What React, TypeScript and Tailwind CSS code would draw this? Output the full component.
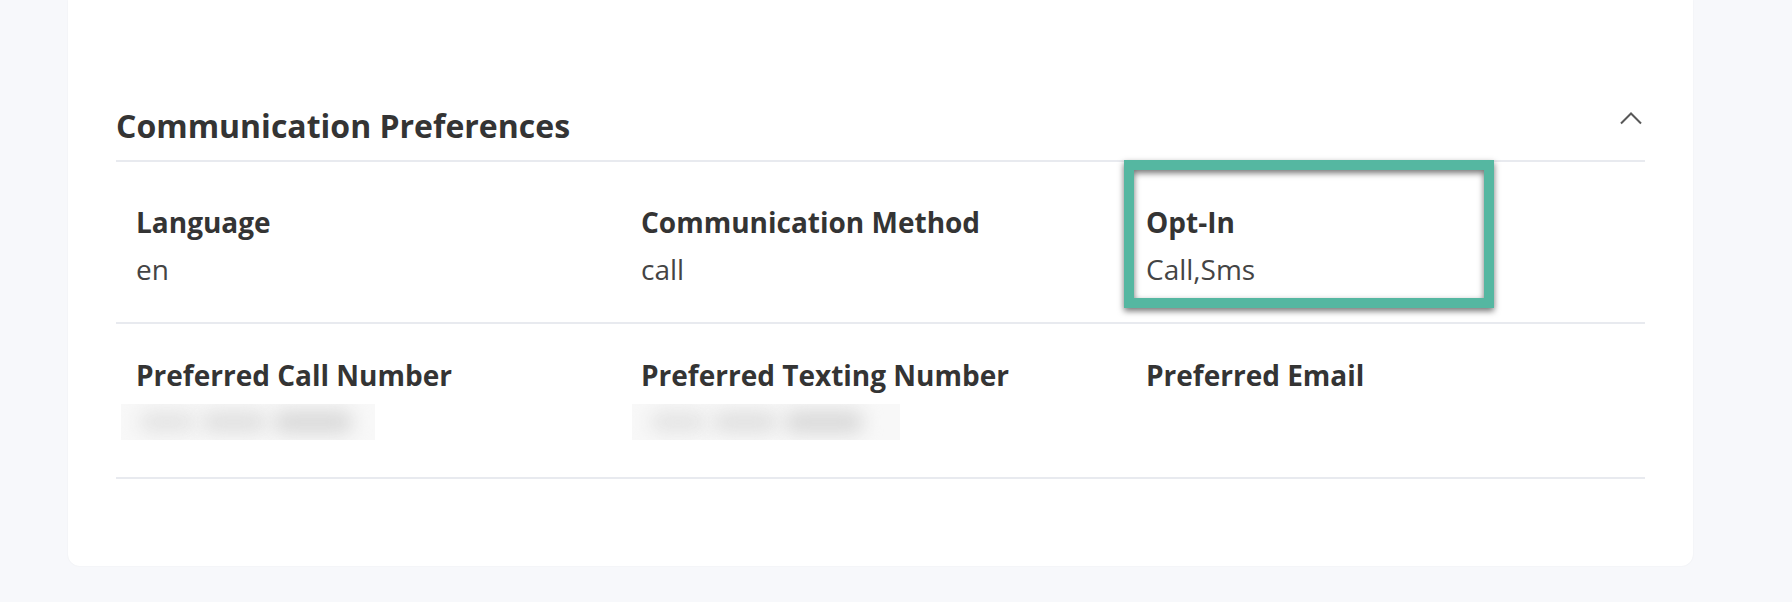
import React from "react";

type Field = { label: string; value?: string; maskClass?: string };

const rows: { fields: Field[]; top: string; bottom: string }[] = [
  {
    top: "pt-[40px]",
    bottom: "pb-[33px]",
    fields: [
      { label: "Language", value: "en" },
      { label: "Communication Method", value: "call" },
      { label: "Opt-In", value: "Call,Sms" },
    ],
  },
  {
    top: "pt-[31px]",
    bottom: "pb-[37px]",
    fields: [
      { label: "Preferred Call Number", maskClass: "-ml-[15px] w-[254px]" },
      { label: "Preferred Texting Number", maskClass: "-ml-[9px] w-[268px]" },
      { label: "Preferred Email" },
    ],
  },
];

// redacted value: soft grey smudge, no readable content
function Masked({ className }: { className?: string }) {
  return (
    <div className={`mt-[9px] flex h-[36px] items-center gap-[6px] overflow-hidden bg-[#f8f8f8] pl-[18px] ${className ?? ""}`}>
      <div className="h-[22px] w-[56px] rounded-full bg-[#e4e4e4] blur-[9px]" />
      <div className="h-[22px] w-[66px] rounded-full bg-[#e0e0e0] blur-[9px]" />
      <div className="h-[24px] w-[80px] rounded-full bg-[#dadada] blur-[9px]" />
    </div>
  );
}

export default function App() {
  return (
    <div
      className="h-[602px] w-full overflow-hidden bg-[#f7f8fb] pl-[68px]"
      style={{ fontFamily: '"Open Sans", "Noto Sans", sans-serif' }}
    >
      <div className="relative h-[566px] w-[1625px] rounded-b-xl bg-white px-[48px] shadow-[0_0_2px_rgba(0,0,0,0.06)]">
        <div className="flex items-start justify-between border-b-2 border-[#e8eaef] pt-[104px] pb-[12px]">
          <h2 className="text-[32px] font-bold leading-[44px] text-[#343434]">
            Communication Preferences
          </h2>
          <svg width="22" height="13" viewBox="0 0 22 13" className="mt-[8px] mr-[3px]">
            <polyline
              points="1,11.5 11,1.5 21,11.5"
              fill="none"
              stroke="#585858"
              strokeWidth="2"
            />
          </svg>
        </div>

        {rows.map((row, i) => (
          <div
            key={i}
            className={`grid grid-cols-[505px_505px_1fr] border-b-2 border-[#e8eaef] pl-[20px] ${row.top} ${row.bottom}`}
          >
            {row.fields.map((f) => (
              <div key={f.label} className="flex flex-col">
                <span className="text-[28px] font-bold leading-[40px] text-[#343434]">
                  {f.label}
                </span>
                {f.value && (
                  <span className="mt-[7px] text-[28px] leading-[40px] text-[#444444]">
                    {f.value}
                  </span>
                )}
                {f.maskClass && <Masked className={f.maskClass} />}
              </div>
            ))}
          </div>
        ))}

        {/* highlight annotation over the opt-in cell */}
        <div className="pointer-events-none absolute left-[1056px] top-[160px] h-[148px] w-[370px] border-[10px] border-[#55b7a1] drop-shadow-[0_3px_3px_rgba(0,0,0,0.55)]" />
      </div>
    </div>
  );
}
